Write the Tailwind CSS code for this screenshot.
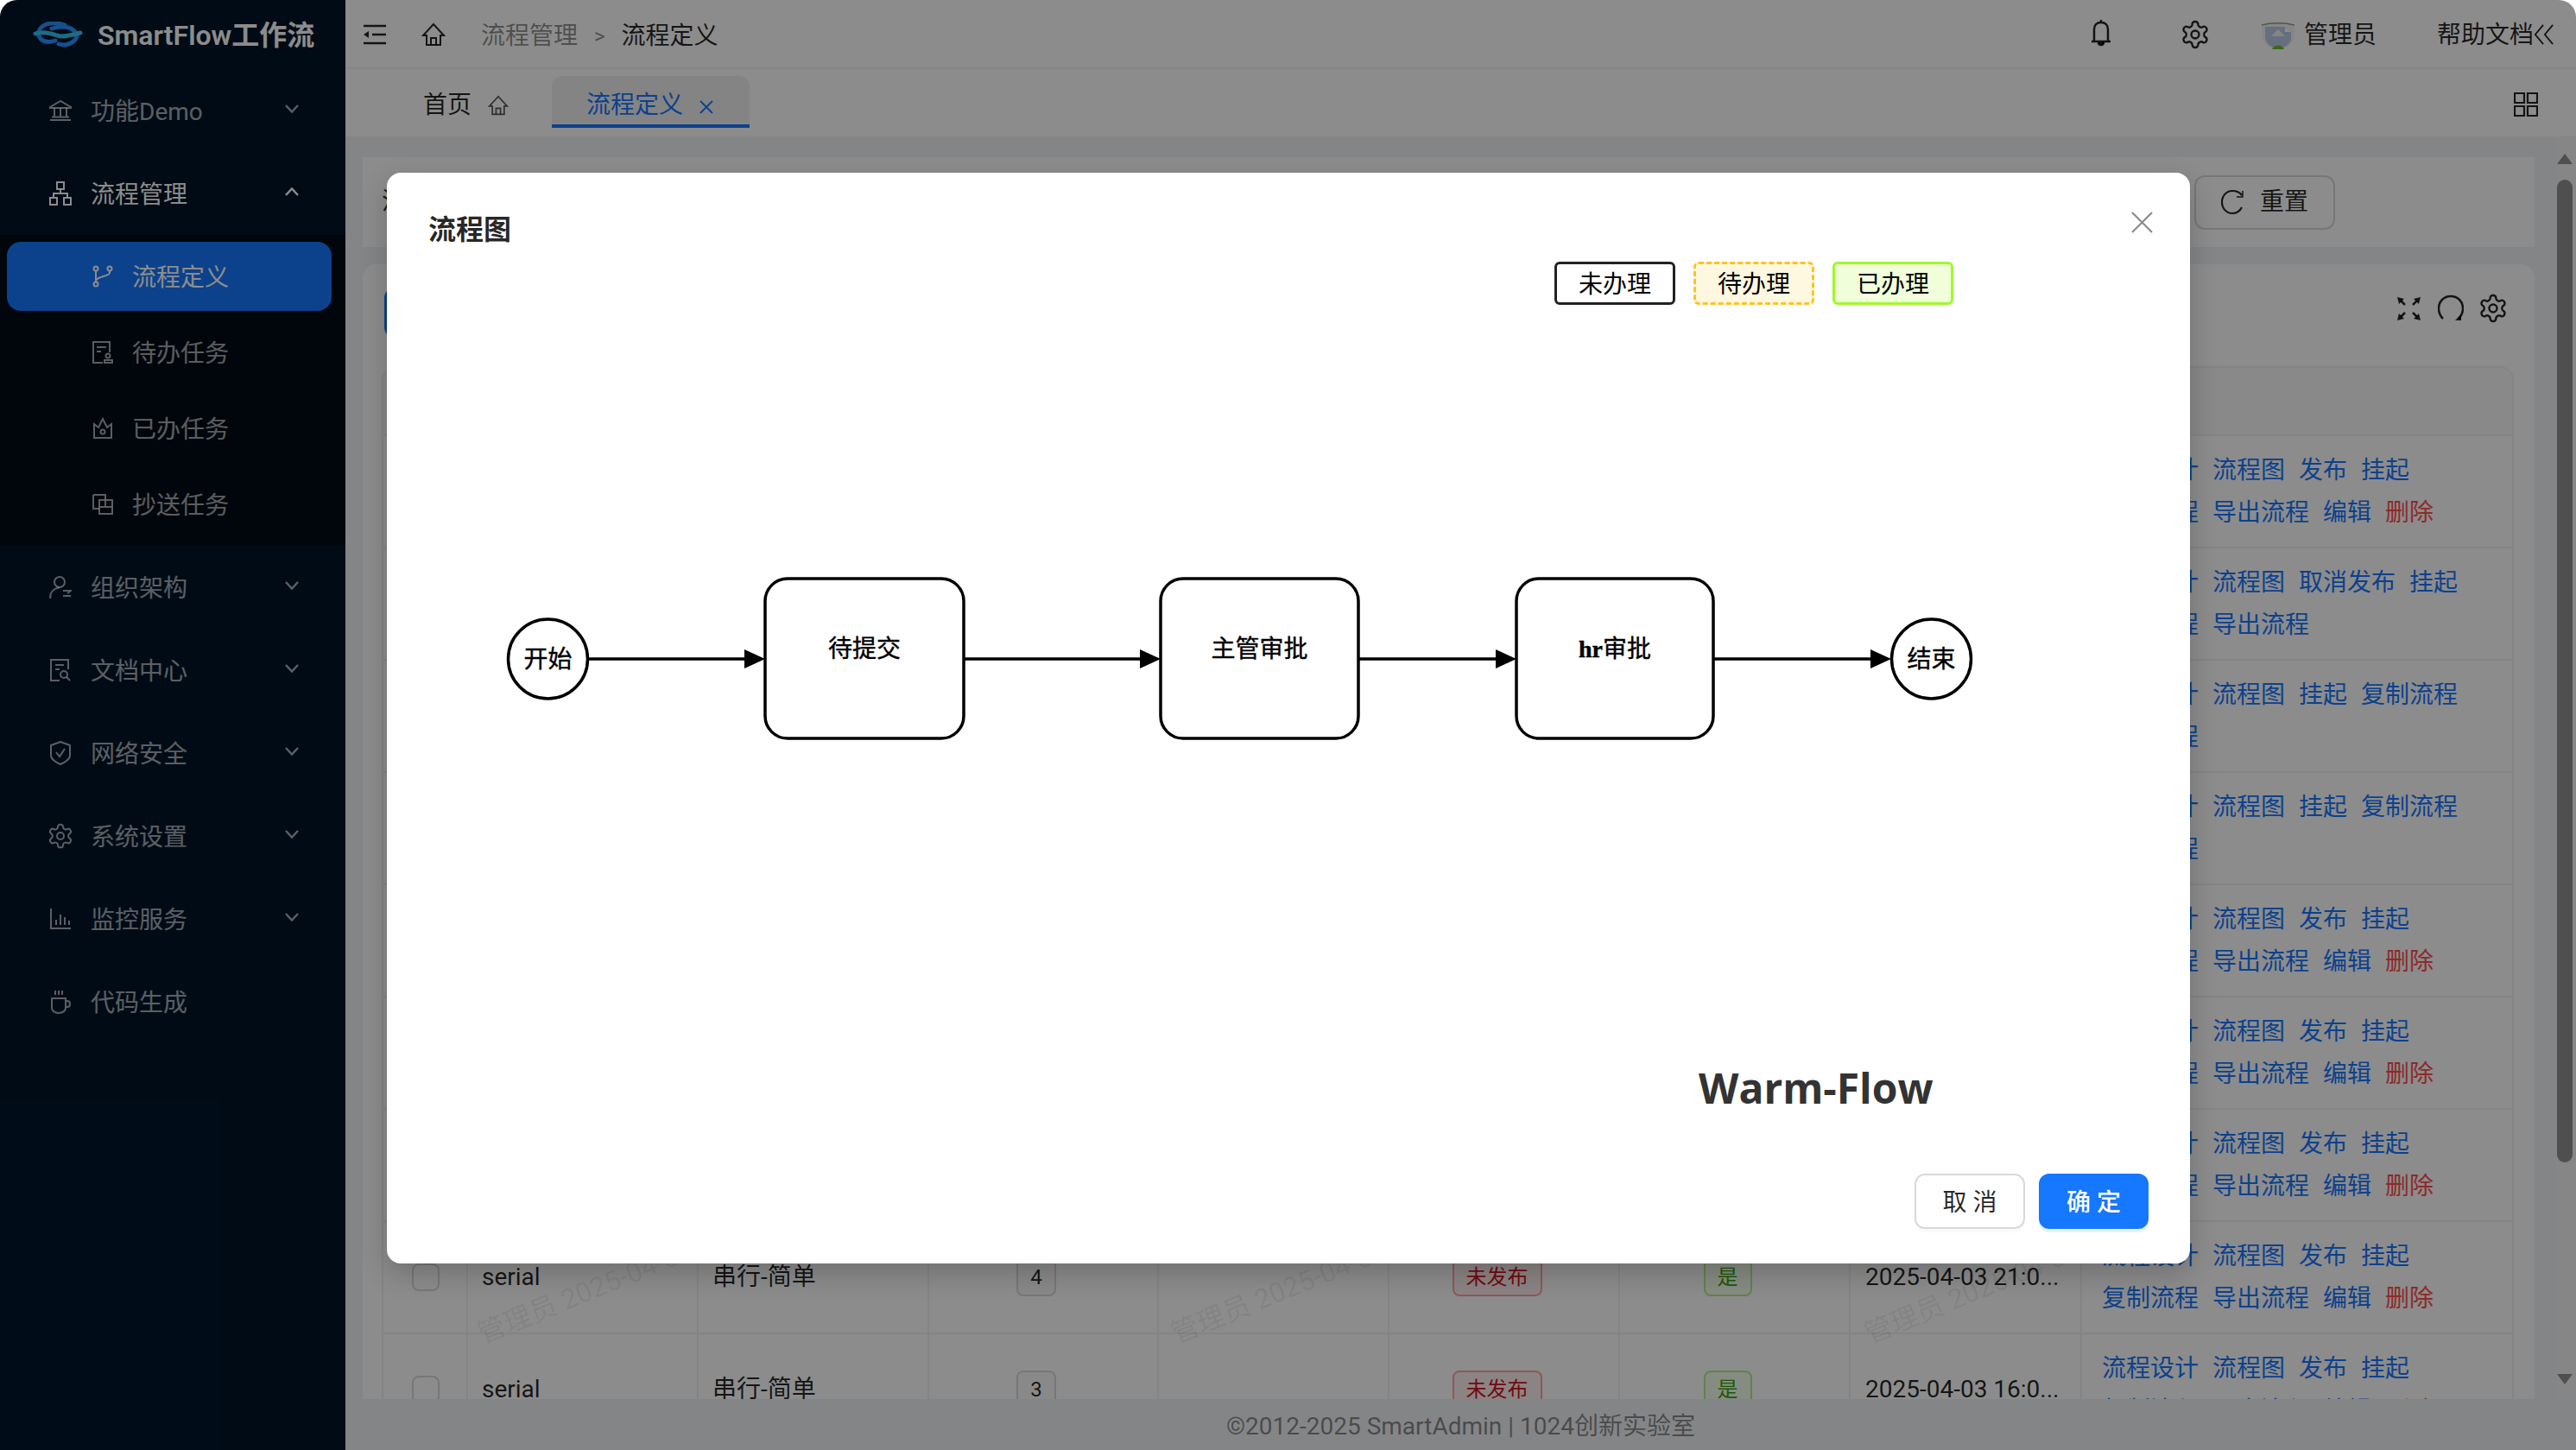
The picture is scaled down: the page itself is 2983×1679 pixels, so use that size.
<!DOCTYPE html>
<html lang="zh-CN">
<head>
    <meta charset="UTF-8">
    <title>SmartFlow工作流</title>
    <script src="https://cdn.jsdelivr.net/npm/@tailwindcss/browser@4"></script>
</head>
<body class="bg-white text-[28px] text-black/85 [font-family:'Roboto','Noto_Sans_CJK_SC',sans-serif]">
<div class="relative flex h-[1679px] w-[2983px] overflow-hidden rounded-t-[20px]">

    <!-- Sidebar -->
    <aside class="w-[400px] shrink-0 bg-[#001529] text-white/65">
        <div class="flex h-20 items-center pl-[38px] text-[32px] font-semibold text-white">
            <svg class="mr-[17px]" width="58" height="30" viewBox="0 0 58 30" fill="none" stroke-linecap="round">
                <path d="M37 4C28 1 18 1 12 5C6 9 5 16 9 20C13 24 20 24 26 22" stroke="#2a90ff" stroke-width="5"/>
                <path d="M22 8C28 6 38 5 44 8C50 11 53 16 49 21C44 27 36 28 30 26" stroke="#2a90ff" stroke-width="5"/>
                <path d="M3 14C12 11 20 13 28 16C36 19 46 15 55 13" stroke="#36c5f0" stroke-width="5"/>
            </svg>
            <span class="pt-[2px]">SmartFlow工作流</span>
        </div>
        <nav class="pt-2">
            <a class="mx-2 mb-4 flex h-20 items-center rounded-2xl pl-[49px]">
                <svg class="mr-[22px]" width="26" height="26" viewBox="0 0 26 26" fill="none" stroke="currentColor" stroke-width="2"><path d="M1 9L13 2L25 9V10H1Z"/><path d="M1 24H25M3 20.500H23M6 10V20M13 10V20M20 10V20"/></svg>
                <span class="pt-1">功能Demo</span>
                <svg class="mb-1 ml-auto mr-[46px]" width="16" height="10" viewBox="0 0 16 10" fill="none" stroke="currentColor" stroke-width="2.500"><path d="M1 1L8 8.500L15 1"/></svg>
            </a>
            <a class="mx-2 mb-2 flex h-20 items-center rounded-2xl pl-[49px] text-white">
                <svg class="mr-[22px]" width="26" height="28" viewBox="0 0 26 28" fill="none" stroke="currentColor" stroke-width="2"><path d="M9 1H17V9H9ZM1 19H9V27H1ZM17 19H25V27H17ZM13 9V14M5 19V14H21V19"/></svg>
                <span class="pt-1">流程管理</span>
                <svg class="mb-1 ml-auto mr-[46px]" width="16" height="10" viewBox="0 0 16 10" fill="none" stroke="currentColor" stroke-width="2.500"><path d="M1 9L8 1.500L15 9"/></svg>
            </a>
            <div class="mb-2 bg-[#000c17] py-2">
                <a class="ml-2 mr-4 mb-2 flex h-20 items-center rounded-2xl bg-[#1677ff] pl-[99px] text-white">
                    <svg class="mr-[22px]" width="24" height="26" viewBox="0 0 24 26" fill="none" stroke="currentColor" stroke-width="2"><circle cx="4" cy="4" r="2.500"/><circle cx="20" cy="4" r="2.500"/><circle cx="4" cy="22" r="2.500"/><path d="M4 6.500V19.500M20 6.500V9C20 13 5 13 4 18"/></svg>
                    <span class="pt-1">流程定义</span>
                </a>
                <a class="mx-2 mb-2 flex h-20 items-center rounded-2xl pl-[99px]">
                    <svg class="mr-[22px]" width="24" height="26" viewBox="0 0 24 26" fill="none" stroke="currentColor" stroke-width="2"><path d="M12 25H1V1H20V13M5 7H16M5 12H10"/><circle cx="18" cy="17" r="2.500"/><path d="M14 25V22H23V25Z"/></svg>
                    <span class="pt-1">待办任务</span>
                </a>
                <a class="mx-2 mb-2 flex h-20 items-center rounded-2xl pl-[99px]">
                    <svg class="mr-[22px]" width="24" height="26" viewBox="0 0 24 26" fill="none" stroke="currentColor" stroke-width="2"><path d="M2 8L7 12L12 2L17 12L22 8V24H2Z"/><circle cx="12" cy="17" r="2.500"/></svg>
                    <span class="pt-1">已办任务</span>
                </a>
                <a class="mx-2 flex h-20 items-center rounded-2xl pl-[99px]">
                    <svg class="mr-[22px]" width="24" height="26" viewBox="0 0 24 26" fill="none" stroke="currentColor" stroke-width="2"><path d="M1 2H15V8M8 18H1V2"/><path d="M8 8H23V24H8ZM8 16H23M15 8V16"/></svg>
                    <span class="pt-1">抄送任务</span>
                </a>
            </div>
            <a class="mx-2 mb-4 flex h-20 items-center rounded-2xl pl-[49px]">
                <svg class="mr-[22px]" width="26" height="28" viewBox="0 0 26 28" fill="none" stroke="currentColor" stroke-width="2"><circle cx="12" cy="8" r="6"/><path d="M1 27C1 20 5 15 12 14.500M16 18H25L21 21M25 24H16"/></svg>
                <span class="pt-1">组织架构</span>
                <svg class="mb-1 ml-auto mr-[46px]" width="16" height="10" viewBox="0 0 16 10" fill="none" stroke="currentColor" stroke-width="2.500"><path d="M1 1L8 8.500L15 1"/></svg>
            </a>
            <a class="mx-2 mb-4 flex h-20 items-center rounded-2xl pl-[49px]">
                <svg class="mr-[22px]" width="26" height="28" viewBox="0 0 26 28" fill="none" stroke="currentColor" stroke-width="2"><path d="M12 26H2V2H22V13M7 8H17M7 13H12"/><circle cx="17" cy="19" r="4"/><path d="M20 22L24 26"/></svg>
                <span class="pt-1">文档中心</span>
                <svg class="mb-1 ml-auto mr-[46px]" width="16" height="10" viewBox="0 0 16 10" fill="none" stroke="currentColor" stroke-width="2.500"><path d="M1 1L8 8.500L15 1"/></svg>
            </a>
            <a class="mx-2 mb-4 flex h-20 items-center rounded-2xl pl-[49px]">
                <svg class="mr-[22px]" width="26" height="28" viewBox="0 0 26 28" fill="none" stroke="currentColor" stroke-width="2"><path d="M13 1L24 5V17C24 21 18 25 13 27C8 25 2 21 2 17V5Z"/><path d="M8 13L12 18L18 9"/></svg>
                <span class="pt-1">网络安全</span>
                <svg class="mb-1 ml-auto mr-[46px]" width="16" height="10" viewBox="0 0 16 10" fill="none" stroke="currentColor" stroke-width="2.500"><path d="M1 1L8 8.500L15 1"/></svg>
            </a>
            <a class="mx-2 mb-4 flex h-20 items-center rounded-2xl pl-[49px]">
                <svg class="-ml-[3px] mr-[19px]" width="32" height="32" viewBox="0 0 24 24" fill="none" stroke="currentColor" stroke-width="1.500"><path d="M12.220 2h-.44a2 2 0 0 0-2 2v.18a2 2 0 0 1-1 1.730l-.43.25a2 2 0 0 1-2 0l-.15-.08a2 2 0 0 0-2.730.73l-.22.38a2 2 0 0 0 .73 2.730l.15.1a2 2 0 0 1 1 1.720v.51a2 2 0 0 1-1 1.740l-.15.09a2 2 0 0 0-.73 2.730l.22.38a2 2 0 0 0 2.730.73l.15-.08a2 2 0 0 1 2 0l.43.25a2 2 0 0 1 1 1.730V20a2 2 0 0 0 2 2h.44a2 2 0 0 0 2-2v-.18a2 2 0 0 1 1-1.730l.43-.25a2 2 0 0 1 2 0l.15.08a2 2 0 0 0 2.730-.73l.22-.39a2 2 0 0 0-.73-2.730l-.15-.08a2 2 0 0 1-1-1.740v-.5a2 2 0 0 1 1-1.740l.15-.09a2 2 0 0 0 .73-2.730l-.22-.38a2 2 0 0 0-2.730-.73l-.15.08a2 2 0 0 1-2 0l-.43-.25a2 2 0 0 1-1-1.730V4a2 2 0 0 0-2-2z"/><circle cx="12" cy="12" r="3"/></svg>
                <span class="pt-1">系统设置</span>
                <svg class="mb-1 ml-auto mr-[46px]" width="16" height="10" viewBox="0 0 16 10" fill="none" stroke="currentColor" stroke-width="2.500"><path d="M1 1L8 8.500L15 1"/></svg>
            </a>
            <a class="mx-2 mb-4 flex h-20 items-center rounded-2xl pl-[49px]">
                <svg class="mr-[22px]" width="26" height="26" viewBox="0 0 26 26" fill="none" stroke="currentColor" stroke-width="2"><path d="M2 1V24H25M8 20V14M13 20V8M18 20V11M23 20V15"/></svg>
                <span class="pt-1">监控服务</span>
                <svg class="mb-1 ml-auto mr-[46px]" width="16" height="10" viewBox="0 0 16 10" fill="none" stroke="currentColor" stroke-width="2.500"><path d="M1 1L8 8.500L15 1"/></svg>
            </a>
            <a class="mx-2 flex h-20 items-center rounded-2xl pl-[49px]">
                <svg class="mr-[22px]" width="26" height="28" viewBox="0 0 26 28" fill="none" stroke="currentColor" stroke-width="2"><path d="M3 10H19V21C19 24 16 27 11 27C6 27 3 24 3 21ZM19 13H21C25 13 25 20 21 20H19M7 1V6M11 1V6M15 1V6"/></svg>
                <span class="pt-1">代码生成</span>
            </a>
        </nav>
    </aside>

    <!-- Main -->
    <main class="flex min-w-0 flex-1 flex-col bg-[#f0f2f5]">
        <header class="flex h-20 shrink-0 items-center border-b-2 border-black/5 bg-white pl-[21px] pr-[25px] pt-[2px]">
            <svg class="mr-[41px]" width="26" height="24" viewBox="0 0 26 24" fill="none" stroke="currentColor" stroke-width="2.500"><path d="M0 2H26M10 12H26M0 22H26"/><path d="M0 12L6 8V16Z" fill="currentColor" stroke="none"/></svg>
            <svg class="mr-[41px]" width="28" height="28" viewBox="0 0 28 28" fill="none" stroke="currentColor" stroke-width="2"><path d="M14 2L2 15H6V26H22V15H26Z"/><path d="M11 26V18H17V26"/></svg>
            <span class="pt-[3px] text-black/45">流程管理</span>
            <span class="mx-[19px] pt-[3px] text-[24px] text-black/45">&gt;</span>
            <span class="pt-[3px]">流程定义</span>
            <svg class="mb-1 ml-auto mr-[78px]" width="26" height="32" viewBox="1 0 24 32" fill="none" stroke="currentColor" stroke-width="2.500"><path d="M5 26V12C5 7 8 4 13 4C18 4 21 7 21 12V26M2 26H24M13 1V4"/><path d="M10 27C10 31 16 31 16 27" fill="currentColor"/></svg>
            <svg class="mr-[58px]" width="36" height="36" viewBox="0 0 24 24" fill="none" stroke="currentColor" stroke-width="1.600"><path d="M12.220 2h-.44a2 2 0 0 0-2 2v.18a2 2 0 0 1-1 1.730l-.43.25a2 2 0 0 1-2 0l-.15-.08a2 2 0 0 0-2.730.73l-.22.38a2 2 0 0 0 .73 2.730l.15.1a2 2 0 0 1 1 1.720v.51a2 2 0 0 1-1 1.740l-.15.09a2 2 0 0 0-.73 2.730l.22.38a2 2 0 0 0 2.730.73l.15-.08a2 2 0 0 1 2 0l.43.25a2 2 0 0 1 1 1.730V20a2 2 0 0 0 2 2h.44a2 2 0 0 0 2-2v-.18a2 2 0 0 1 1-1.730l.43-.25a2 2 0 0 1 2 0l.15.08a2 2 0 0 0 2.730-.73l.22-.39a2 2 0 0 0-.73-2.730l-.15-.08a2 2 0 0 1-1-1.740v-.5a2 2 0 0 1 1-1.740l.15-.09a2 2 0 0 0 .73-2.730l-.22-.38a2 2 0 0 0-2.730-.73l-.15.08a2 2 0 0 1-2 0l-.43-.25a2 2 0 0 1-1-1.730V4a2 2 0 0 0-2-2z"/><circle cx="12" cy="12" r="3"/></svg>
            <svg class="mr-[10px] mt-[4px]" width="40" height="32" viewBox="0 0 40 32"><path d="M1 3C12 0 28 0 39 3V14C39 23 30 31 20 31C10 31 1 23 1 14Z" fill="#f4f4f4"/><path d="M1 3C12 0 28 0 39 3" fill="none" stroke="#999" stroke-width="1.500"/><path d="M5 5H28L35 11V20C34 24 28 30 20 30C12 30 6 24 5 18Z" fill="#bccae6"/><path d="M12 16L20 8L28 16Z" fill="#eef0f5"/><path d="M28 5L35 11H28Z" fill="#fff"/><path d="M13 31C15 25 25 25 27 31Z" fill="#6cc024"/></svg>
            <span class="mr-[70px] pt-[2px]">管理员</span>
            <span class="pt-[2px]">帮助文档</span>
            <svg width="24" height="26" viewBox="0 0 26 26" fill="none" stroke="currentColor" stroke-width="2"><path d="M12 1L2 13L12 25M24 1L14 13L24 25"/></svg>
        </header>

        <div class="flex h-20 shrink-0 border-b-2 border-black/5 bg-white pl-[90px]">
            <div class="flex h-[80px] items-center pr-[50px]">
                <span class="pt-1">首页</span>
                <svg class="ml-[19px] mt-1 text-black/65" width="24" height="26" viewBox="0 0 28 28" fill="none" stroke="currentColor" stroke-width="2"><path d="M14 2L2 15H6V26H22V15H26Z"/><path d="M11 26V18H17V26"/></svg>
            </div>
            <div class="mt-2 flex h-[60px] w-[229px] items-center rounded-t-xl border-b-4 border-[#1677ff] bg-[#f0f0f0] pl-10 pt-3 text-[#1677ff]">
                流程定义
                <svg class="ml-[18px] mt-1" width="18" height="18" viewBox="0 0 18 18" fill="none" stroke="currentColor" stroke-width="1.800"><path d="M2 2L16 16M16 2L2 16"/></svg>
            </div>
            <svg class="ml-auto mr-[44px] mt-[27px]" width="28" height="28" viewBox="0 0 28 28" fill="none" stroke="currentColor" stroke-width="2.200"><path d="M1 1H12V12H1ZM16 1H27V12H16ZM1 16H12V27H1ZM16 16H27V27H16Z"/></svg>
        </div>

        <div class="relative flex-1 overflow-hidden">
            <!-- Scrollbar -->
            <div class="absolute bottom-0 right-0 top-0 w-[23px] bg-[#f5f5f5]">
                <div class="absolute left-[1px] top-[18px] h-0 w-0 border-x-[9px] border-b-[12px] border-x-transparent border-b-[#919191]"></div>
                <div class="absolute left-[1px] top-[48px] h-[1138px] w-[18px] rounded-[9px] bg-[#919191]"></div>
                <div class="absolute left-[1px] top-[1431px] h-0 w-0 border-x-[9px] border-t-[12px] border-x-transparent border-t-[#919191]"></div>
            </div>

            <div class="ml-5 mt-[22px] w-[2515px]">
                <div class="flex h-[104px] items-center bg-white pl-[22px] pr-[231px]">
                    <span>流程编码</span>
                    <button class="ml-auto flex h-[63px] w-[163px] items-center rounded-xl border-2 border-[#d9d9d9] pl-[28px]">
                        <svg class="mr-[18px]" width="28" height="30" viewBox="0 0 28 30" fill="none" stroke="currentColor" stroke-width="2.200"><path d="M25 7C22 3 18 2 14 2C7 2 2 8 2 15C2 22 7 28 14 28C19 28 23 25 25 21"/><path d="M26 2V9H19" stroke-width="1.500"/></svg>
                        重置
                    </button>
                </div>
                <div class="relative mt-5 rounded-t-2xl bg-white px-[25px] pt-[27px]">
                    <div class="mb-[33px] flex h-[58px] items-center">
                        <button class="h-[58px] w-[150px] rounded-xl bg-[#1677ff]"></button>
                        <div class="-mt-[10px] ml-auto mr-[5px] flex items-center gap-5">
                            <svg width="27" height="27" viewBox="0 0 27 27" fill="currentColor"><path d="M0 0L8 2L2 8ZM27 0L25 8L19 2ZM0 27L2 19L8 25ZM27 27L19 25L25 19Z"/><path d="M4 4L9 9M23 4L18 9M4 23L9 18M23 23L18 18" stroke="currentColor" stroke-width="2.500"/></svg>
                            <svg width="30" height="32" viewBox="0 0 30 32" fill="none" stroke="currentColor" stroke-width="2.500"><path d="M6 28C3 25 1 21 1 16C1 8 7 2 15 2C23 2 29 8 29 16C29 21 27 25 24 28"/><path d="M20 30H27V23Z" fill="currentColor" stroke="none"/></svg>
                            <svg class="-ml-1" width="36" height="36" viewBox="0 0 24 24" fill="none" stroke="currentColor" stroke-width="1.600"><path d="M12.220 2h-.44a2 2 0 0 0-2 2v.18a2 2 0 0 1-1 1.730l-.43.25a2 2 0 0 1-2 0l-.15-.08a2 2 0 0 0-2.730.73l-.22.38a2 2 0 0 0 .73 2.730l.15.1a2 2 0 0 1 1 1.720v.51a2 2 0 0 1-1 1.740l-.15.09a2 2 0 0 0-.73 2.730l.22.38a2 2 0 0 0 2.730.73l.15-.08a2 2 0 0 1 2 0l.43.25a2 2 0 0 1 1 1.730V20a2 2 0 0 0 2 2h.44a2 2 0 0 0 2-2v-.18a2 2 0 0 1 1-1.730l.43-.25a2 2 0 0 1 2 0l.15.08a2 2 0 0 0 2.730-.73l.22-.39a2 2 0 0 0-.73-2.730l-.15-.08a2 2 0 0 1-1-1.740v-.5a2 2 0 0 1 1-1.740l.15-.09a2 2 0 0 0 .73-2.730l-.22-.38a2 2 0 0 0-2.730-.73l-.15.08a2 2 0 0 1-2 0l-.43-.25a2 2 0 0 1-1-1.730V4a2 2 0 0 0-2-2z"/><circle cx="12" cy="12" r="3"/></svg>
                        </div>
                    </div>

                    <!-- Table -->
                    <table class="-ml-[3px] w-[2465px] table-fixed border-separate border-spacing-0 overflow-hidden rounded-t-2xl border-x-2 border-t-2 border-[#f0f0f0]">
                        <colgroup>
                            <col class="w-[96px]"><col class="w-[267px]"><col class="w-[267px]"><col class="w-[266px]"><col class="w-[267px]"><col class="w-[267px]"><col class="w-[267px]"><col class="w-[268px]"><col class="w-[500px]">
                        </colgroup>
                        <thead>
                            <tr class="h-[79px] bg-[#fafafa]"><th colspan="9" class="border-b-2 border-[#f0f0f0]"></th></tr>
                        </thead>
                        <tbody class="text-left">
                            <tr class="h-[130px]"><td colspan="8" class="border-b-2 border-[#f0f0f0]"></td>
                                <td class="border-b-2 border-l-2 border-[#f0f0f0] pl-[23px] text-[#1677ff] leading-[49px]"><a class="mr-4">流程设计</a><a class="mr-4">流程图</a><a class="mr-4">发布</a><a>挂起</a><br><a class="mr-4">复制流程</a><a class="mr-4">导出流程</a><a class="mr-4">编辑</a><a class="text-[#ff4d4f]">删除</a></td></tr>
                            <tr class="h-[130px]"><td colspan="8" class="border-b-2 border-[#f0f0f0]"></td>
                                <td class="border-b-2 border-l-2 border-[#f0f0f0] pl-[23px] text-[#1677ff] leading-[49px]"><a class="mr-4">流程设计</a><a class="mr-4">流程图</a><a class="mr-4">取消发布</a><a>挂起</a><br><a class="mr-4">复制流程</a><a>导出流程</a></td></tr>
                            <tr class="h-[130px]"><td colspan="8" class="border-b-2 border-[#f0f0f0]"></td>
                                <td class="border-b-2 border-l-2 border-[#f0f0f0] pl-[23px] text-[#1677ff] leading-[49px]"><a class="mr-4">流程设计</a><a class="mr-4">流程图</a><a class="mr-4">挂起</a><a>复制流程</a><br><a>导出流程</a></td></tr>
                            <tr class="h-[130px]"><td colspan="8" class="border-b-2 border-[#f0f0f0]"></td>
                                <td class="border-b-2 border-l-2 border-[#f0f0f0] pl-[23px] text-[#1677ff] leading-[49px]"><a class="mr-4">流程设计</a><a class="mr-4">流程图</a><a class="mr-4">挂起</a><a>复制流程</a><br><a>导出流程</a></td></tr>
                            <tr class="h-[130px]"><td colspan="8" class="border-b-2 border-[#f0f0f0]"></td>
                                <td class="border-b-2 border-l-2 border-[#f0f0f0] pl-[23px] text-[#1677ff] leading-[49px]"><a class="mr-4">流程设计</a><a class="mr-4">流程图</a><a class="mr-4">发布</a><a>挂起</a><br><a class="mr-4">复制流程</a><a class="mr-4">导出流程</a><a class="mr-4">编辑</a><a class="text-[#ff4d4f]">删除</a></td></tr>
                            <tr class="h-[130px]"><td colspan="8" class="border-b-2 border-[#f0f0f0]"></td>
                                <td class="border-b-2 border-l-2 border-[#f0f0f0] pl-[23px] text-[#1677ff] leading-[49px]"><a class="mr-4">流程设计</a><a class="mr-4">流程图</a><a class="mr-4">发布</a><a>挂起</a><br><a class="mr-4">复制流程</a><a class="mr-4">导出流程</a><a class="mr-4">编辑</a><a class="text-[#ff4d4f]">删除</a></td></tr>
                            <tr class="h-[130px]"><td colspan="8" class="border-b-2 border-[#f0f0f0]"></td>
                                <td class="border-b-2 border-l-2 border-[#f0f0f0] pl-[23px] text-[#1677ff] leading-[49px]"><a class="mr-4">流程设计</a><a class="mr-4">流程图</a><a class="mr-4">发布</a><a>挂起</a><br><a class="mr-4">复制流程</a><a class="mr-4">导出流程</a><a class="mr-4">编辑</a><a class="text-[#ff4d4f]">删除</a></td></tr>
                            <tr class="h-[130px]">
                                <td class="border-b-2 border-[#f0f0f0] pl-[33px]"><span class="block h-8 w-8 rounded-lg border-2 border-[#d9d9d9]"></span></td>
                                <td class="border-b-2 border-l-2 border-[#f0f0f0] pl-[16px]">serial</td>
                                <td class="border-b-2 border-l-2 border-[#f0f0f0] pl-[16px]">串行-简单</td>
                                <td class="border-b-2 border-l-2 border-[#f0f0f0] text-center"><span class="mr-4 inline-block h-11 rounded-lg border-2 border-[#d9d9d9] bg-[#fafafa] px-[14px] text-[24px] leading-10">4</span></td>
                                <td class="border-b-2 border-l-2 border-[#f0f0f0]"></td>
                                <td class="border-b-2 border-l-2 border-[#f0f0f0] text-center"><span class="mr-4 inline-block h-11 rounded-lg border-2 border-[#ffa39e] bg-[#fff1f0] px-[14px] text-[24px] leading-10 text-[#cf1322]">未发布</span></td>
                                <td class="border-b-2 border-l-2 border-[#f0f0f0] text-center"><span class="mr-4 inline-block h-11 rounded-lg border-2 border-[#b7eb8f] bg-[#f6ffed] px-[14px] text-[24px] leading-10 text-[#389e0d]">是</span></td>
                                <td class="border-b-2 border-l-2 border-[#f0f0f0] pl-[17px] whitespace-nowrap">2025-04-03 21:0...</td>
                                <td class="border-b-2 border-l-2 border-[#f0f0f0] pl-[23px] text-[#1677ff] leading-[49px]"><a class="mr-4">流程设计</a><a class="mr-4">流程图</a><a class="mr-4">发布</a><a>挂起</a><br><a class="mr-4">复制流程</a><a class="mr-4">导出流程</a><a class="mr-4">编辑</a><a class="text-[#ff4d4f]">删除</a></td>
                            </tr>
                            <tr class="h-[130px]">
                                <td class="border-b-2 border-[#f0f0f0] pl-[33px]"><span class="block h-8 w-8 rounded-lg border-2 border-[#d9d9d9]"></span></td>
                                <td class="border-b-2 border-l-2 border-[#f0f0f0] pl-[16px]">serial</td>
                                <td class="border-b-2 border-l-2 border-[#f0f0f0] pl-[16px]">串行-简单</td>
                                <td class="border-b-2 border-l-2 border-[#f0f0f0] text-center"><span class="mr-4 inline-block h-11 rounded-lg border-2 border-[#d9d9d9] bg-[#fafafa] px-[14px] text-[24px] leading-10">3</span></td>
                                <td class="border-b-2 border-l-2 border-[#f0f0f0]"></td>
                                <td class="border-b-2 border-l-2 border-[#f0f0f0] text-center"><span class="mr-4 inline-block h-11 rounded-lg border-2 border-[#ffa39e] bg-[#fff1f0] px-[14px] text-[24px] leading-10 text-[#cf1322]">未发布</span></td>
                                <td class="border-b-2 border-l-2 border-[#f0f0f0] text-center"><span class="mr-4 inline-block h-11 rounded-lg border-2 border-[#b7eb8f] bg-[#f6ffed] px-[14px] text-[24px] leading-10 text-[#389e0d]">是</span></td>
                                <td class="border-b-2 border-l-2 border-[#f0f0f0] pl-[17px] whitespace-nowrap">2025-04-03 16:0...</td>
                                <td class="border-b-2 border-l-2 border-[#f0f0f0] pl-[23px] text-[#1677ff] leading-[49px]"><a class="mr-4">流程设计</a><a class="mr-4">流程图</a><a class="mr-4">发布</a><a>挂起</a><br><a class="mr-4">复制流程</a><a class="mr-4">导出流程</a><a class="mr-4">编辑</a><a class="text-[#ff4d4f]">删除</a></td>
                            </tr>
                        </tbody>
                    </table>

                    <!-- Watermarks -->
                    <span class="absolute left-[125px] top-[1166px] -rotate-[22deg] whitespace-nowrap text-[32px] text-black/[.08]">管理员 2025-04-03</span>
                    <span class="absolute left-[928px] top-[1166px] -rotate-[22deg] whitespace-nowrap text-[32px] text-black/[.08]">管理员 2025-04-03</span>
                    <span class="absolute left-[1731px] top-[1166px] -rotate-[22deg] whitespace-nowrap text-[32px] text-black/[.08]">管理员 2025-04-03</span>
                </div>
            </div>
        </div>

        <footer class="flex h-[59px] shrink-0 items-center justify-center pt-1 text-black/45">©2012-2025 SmartAdmin | 1024创新实验室</footer>
    </main>

    <!-- Modal mask -->
    <div class="absolute inset-0 bg-black/45"></div>
    <div class="absolute left-[448px] top-[200px] flex h-[1263px] w-[2088px] flex-col rounded-2xl bg-white shadow-[0_12px_32px_rgba(0,0,0,0.2)]">
        <h2 class="h-[103px] pl-12 pt-[44px] text-[32px] leading-[44px] font-semibold">流程图</h2>
        <svg class="absolute left-[2020px] top-[45px]" width="25" height="25" viewBox="0 0 25 25" fill="none" stroke="#8c8c8c" stroke-width="2.200"><path d="M1 1L24 24M24 1L1 24"/></svg>
        <div class="flex h-[50px] shrink-0 justify-end gap-[21px] pr-[274px] text-black">
            <span class="flex w-[140px] items-center justify-center rounded-md border-[3px] border-[#222] pt-1">未办理</span>
            <span class="flex w-[140px] items-center justify-center rounded-md border-[3px] border-dashed border-[#ffc31f] bg-[#fff8e0] pt-1">待办理</span>
            <span class="flex w-[140px] items-center justify-center rounded-md border-[3px] border-[#a0f82a] bg-[#f0ffd9] pt-1">已办理</span>
        </div>
        <svg class="flex-1 [font-family:'Liberation_Serif','Noto_Sans_CJK_SC',serif]" width="2088" height="1006" viewBox="0 0 2088 1006" fill="#fff" stroke="#000" stroke-width="3.500">
            <circle cx="186.500" cy="410" r="46"/>
            <rect x="438" y="317" width="230" height="185" rx="26"/>
            <rect x="896" y="317" width="229" height="185" rx="26"/>
            <rect x="1308" y="317" width="228" height="185" rx="26"/>
            <circle cx="1788.500" cy="410" r="46"/>
            <path d="M233 410H414M668 410H872M1125 410H1284M1536 410H1718" fill="none"/>
            <g fill="#000" stroke="none">
                <path d="M414 399L438 410L414 421Z"/>
                <path d="M872 399L896 410L872 421Z"/>
                <path d="M1284 399L1308 410L1284 421Z"/>
                <path d="M1718 399L1742 410L1718 421Z"/>
                <g font-size="28" text-anchor="middle" stroke="#000" stroke-width="0.400">
                    <text x="186.500" y="420">开始</text>
                    <text x="553" y="408">待提交</text>
                    <text x="1010.500" y="408">主管审批</text>
                    <text x="1422" y="408"><tspan font-weight="700">hr</tspan>审批</text>
                    <text x="1788.500" y="420">结束</text>
                </g>
                <text x="1519" y="925" fill="#333" font-size="48" font-weight="700" font-family="Open Sans, sans-serif">Warm-Flow</text>
            </g>
        </svg>
        <div class="flex h-[104px] shrink-0 justify-end gap-4 pr-12">
            <button class="h-16 w-[128px] rounded-xl border-2 border-[#d9d9d9] bg-white pt-1 shadow-[0_4px_0_rgba(0,0,0,0.02)]">取 消</button>
            <button class="h-16 w-[127px] rounded-xl bg-[#1677ff] pt-1 font-medium text-white shadow-[0_4px_0_rgba(5,145,255,0.1)]">确 定</button>
        </div>
    </div>
</div>
</body>
</html>
